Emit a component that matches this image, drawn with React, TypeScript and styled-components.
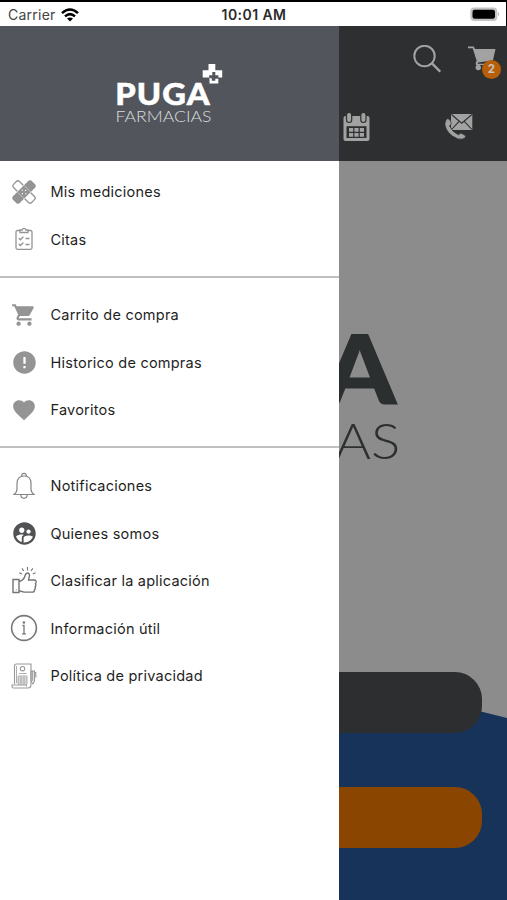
import React from "react";
import styled, { createGlobalStyle } from "styled-components";
import { MdShoppingCart, MdError, MdFavorite, MdSupervisedUserCircle } from "react-icons/md";

const GlobalStyle = createGlobalStyle`
  * { box-sizing: border-box; }
  body { margin: 0; background: #fff; font-family: Inter, "Liberation Sans", sans-serif; }
`;

const Screen = styled.div`
  width: 507px;
  height: 900px;
  display: flex;
  flex-direction: column;
  overflow: hidden;
`;

const StatusBar = styled.header`
  height: 25.5px;
  flex: none;
  border-top: 2px solid #000;
  border-right: 1px solid #000;
  display: grid;
  grid-template-columns: 1fr auto 1fr;
  align-items: center;
  padding: 2px 6px 0 8px;
  color: #2b2b2b;
  font-size: 14px;
`;

const Carrier = styled.span`
  display: flex;
  align-items: center;
  gap: 5px;
  letter-spacing: 0.25px;
  color: #444;
`;

const Clock = styled.span`
  font-weight: 600;
  font-size: 14px;
  letter-spacing: 0.42px;
`;

const BatterySlot = styled.span`
  display: flex;
  justify-content: flex-end;
`;

const Body = styled.div`
  flex: 1;
  min-height: 0;
  display: grid;
  grid-template-columns: 339px 168px;
`;

const Drawer = styled.nav`
  background: #fff;
  display: flex;
  flex-direction: column;
`;

const DrawerHeader = styled.div`
  height: 135px;
  flex: none;
  background: #52565c;
  display: flex;
  justify-content: center;
  padding-top: 36.5px;
`;

const MenuGroup = styled.ul`
  list-style: none;
  margin: 0;
  padding: 7.3px 0 12.8px;
  border-bottom: 2px solid #c0c0c0;
  & + & {
    padding-top: 13.5px;
  }
  &:last-child {
    border-bottom: 0;
  }
`;

const MenuItem = styled.li`
  height: 47.5px;
  display: flex;
  align-items: center;
  gap: 10.5px;
  padding-left: 8px;
`;

const IconSlot = styled.span<{ $tone?: string }>`
  width: 32px;
  height: 32px;
  flex: none;
  display: flex;
  align-items: center;
  justify-content: center;
  color: ${(p) => p.$tone ?? "#949494"};
`;

const Label = styled.span`
  font-size: 14.5px;
  letter-spacing: 0.23px;
  color: #1f1f1f;
  white-space: nowrap;
`;

const Backdrop = styled.main`
  background: #8c8c8c;
  display: flex;
  flex-direction: column;
  overflow: hidden;
`;

const TopBar = styled.div`
  height: 135px;
  flex: none;
  background: #2d2f30;
  color: #a2a2a2;
  display: grid;
  grid-template-rows: 67px 67px;
`;

const IconRow = styled.div<{ $end?: boolean }>`
  display: flex;
  align-items: center;
  justify-content: ${(p) => (p.$end ? "flex-end" : "flex-start")};
  gap: ${(p) => (p.$end ? 27 : 74)}px;
  padding: ${(p) => (p.$end ? "0 11px 0 0" : "1px 0 0 4px")};
`;

const CartButton = styled.span`
  position: relative;
  display: flex;
`;

const Badge = styled.span`
  position: absolute;
  left: 13.5px;
  top: 13.5px;
  width: 19.5px;
  height: 19.5px;
  border-radius: 50%;
  background: #b75e08;
  color: #c9c1b8;
  font-size: 11.5px;
  font-weight: 700;
  display: flex;
  align-items: center;
  justify-content: center;
`;

const Hero = styled.div`
  flex: 1;
  padding-top: 164px;
`;

const Actions = styled.div`
  position: relative;
  height: 228px;
  flex: none;
  display: flex;
  flex-direction: column;
  gap: 54.5px;
  &::before {
    content: "";
    position: absolute;
    inset: 0;
    background: #17335a;
    clip-path: polygon(0 4px, 100% 46px, 100% 100%, 0 100%);
  }
`;

const ActionButton = styled.div<{ $color: string }>`
  position: relative;
  width: 143px;
  height: 60.5px;
  border-radius: 0 27px 27px 0;
  background: ${(p) => p.$color};
`;

const WifiIcon = () => (
  <svg width="18" height="14" viewBox="0 0 18 14" fill="none" stroke="#000" strokeWidth="2.5">
    <path d="M1 5.2Q9-2.2 17 5.2" />
    <path d="M4 8.4Q9 3.8 14 8.4" />
    <path d="M9 13.4 6 10.6Q9 8.2 12 10.6Z" fill="#000" stroke="none" />
  </svg>
);

const BatteryIcon = () => (
  <svg width="30" height="15" viewBox="0 0 30 15">
    <rect x="0.3" y="0.5" width="27" height="13.5" rx="4" fill="#c4c4c4" />
    <rect x="2.5" y="2.7" width="22.5" height="9" rx="2.2" fill="#000" />
    <path d="M28 5q2 2.2 0 4.4z" fill="#aaa" />
  </svg>
);

const DrawerLogo = () => (
  <svg width="110" height="64" viewBox="115 62 110 64" fill="#fff">
    <text x="115.2" y="104.6" fontFamily="Lato" fontWeight="900" fontSize="30" letterSpacing="1" stroke="#fff" strokeWidth=".5" textLength="95.5" lengthAdjust="spacingAndGlyphs">PUGA</text>
    <text x="115.5" y="122.3" fontFamily="Lato" fontWeight="300" fontSize="16.2" fill="#dcdddf" textLength="96" lengthAdjust="spacingAndGlyphs">FARMACIAS</text>
    <path d="M208.5 64h6.8v6.2h6.9v7.3h-3.8v-2.2h-3.1v-3.2h-3v3.2h-3.2v2.9h2.7v2.5h3.5v-1.9h3v4.700h-8.800v-5.900h-6.800v-7.400h5.800z" />
  </svg>
);

const HeroLogo = () => (
  <svg width="168" height="140" viewBox="339 325 168 140" fill="#2c2f30" display="block">
    <text x="323.5" y="404.300" fontFamily="Lato" fontWeight="900" fontSize="95.500" stroke="#2c2f30" strokeWidth="1.200" textLength="72.500" lengthAdjust="spacingAndGlyphs">A</text>
    <text x="335.300" y="458.600" fontFamily="Lato" fontWeight="300" fontSize="48.500" textLength="65" lengthAdjust="spacingAndGlyphs">AS</text>
  </svg>
);

const SearchIcon = () => (
  <svg width="28" height="28" viewBox="0 0 28 28" fill="none" stroke="currentColor" strokeWidth="2">
    <circle cx="11.5" cy="11" r="10.2" />
    <path d="m18.7 18.2 8.5 8.5" strokeWidth="2.4" />
  </svg>
);

const HeaderCartIcon = () => (
  <svg width="28" height="26" viewBox="0 0 28 26" fill="currentColor">
    <path d="M0 .5h5.8l1.2 2.6h20.500l-2.600 11.400-14.800 2-.6 1.200h14v1.400H8.200q-1-.9-.3-2.800l.8-1.300L4.700 2.300H0z" />
    <circle cx="10.300" cy="21.500" r="2.700" />
    <circle cx="20.500" cy="21.500" r="2.700" />
  </svg>
);

const CalendarIcon = () => (
  <svg width="28" height="28" viewBox="0 0 28 28">
    <path d="M2.500 3h22q2 0 2 2v21q0 2-2 2h-22q-2 0-2-2V5q0-2 2-2z" fill="currentColor" />
    <g fill="currentColor" stroke="#2d2f30" strokeWidth="1.2">
      <rect x="3.500" y="-0.500" width="5.200" height="10" rx="2.400" />
      <rect x="17.800" y="-0.500" width="5.200" height="10" rx="2.400" />
    </g>
    <path d="M3.500 13.200h20V25h-20z" fill="#2d2f30" />
    <path d="M6 15h4.200v3.700H6zm5.400 0h4.200v3.700h-4.200zm5.400 0H21v3.700h-4.200zM6 20h4.200v3.700H6zm5.400 0h4.200v3.700h-4.200zm5.400 0H21v3.700h-4.200z" fill="currentColor" />
  </svg>
);

const ContactIcon = () => (
  <svg width="29" height="28" viewBox="0 0 29 28" fill="currentColor">
    <path d="M6 1h21.300v16H6z" />
    <path d="m6.500 1.500 10.200 8.700 10.200-8.700M6.500 16.500l7.600-8.200m12.800 8.200-7.600-8.200" fill="none" stroke="#2d2f30" strokeWidth="1.100" />
    <path d="M2.500 5.500q3 .3 4 5.300l-2 2q2.500 6 8.800 9l2.300-1.600q4.700 1 5.400 3.900-3.300 3.400-8.600 1.600Q1.500 21-.2 11.500 0 7.200 2.500 5.500z" stroke="#2d2f30" strokeWidth=".7" />
  </svg>
);

const BandageIcon = () => (
  <svg width="24" height="24" viewBox="0 0 24 24">
    <g transform="rotate(45 12 12)">
      <rect x="-0.800" y="7.800" width="25.600" height="8.400" rx="2.200" fill="#fff" stroke="currentColor" strokeWidth="1.300" />
    </g>
    <g transform="rotate(-45 12 12)">
      <rect x="-1.500" y="7" width="27" height="10" rx="2.400" fill="currentColor" stroke="#fff" strokeWidth=".6" />
      <path d="M7.300 7.300v9.400M16.700 7.300v9.400" stroke="#fff" strokeWidth=".4" />
      <path d="M11.300 9.500h1.400M9 12h1.400m4.600 0h-1.400m-2.300 2.500h1.400" stroke="#fff" strokeWidth="1" />
    </g>
  </svg>
);

const ChecklistIcon = () => (
  <svg width="18" height="24" viewBox="0 0 18 24" fill="none" stroke="currentColor" strokeWidth="1.300">
    <path d="M5 3.500H2.500Q1 3.500 1 5v15.800q0 1.500 1.500 1.500h13q1.500 0 1.500-1.500V5q0-1.500-1.500-1.500H13" />
    <path d="M5 5.500V3h2.200Q7.400 1.300 9 1.300T10.800 3H13v2.500z" />
    <path d="m3.700 11.300 1.700 1.500 3-3M10.500 11.500h4M3.700 17l1.700 1.500 3-3M10.500 17.500h4" />
  </svg>
);

const BellIcon = () => (
  <svg width="22" height="28" viewBox="0 0 22 28" fill="none" stroke="currentColor" strokeWidth="1.200">
    <path d="M8.800 4.500Q8.300 1.300 11 1.300t2.200 3.200" />
    <path d="M1 22.500q2.800-1.800 3-5.500v-6Q4.400 4.300 11 4t7 7v6q.2 3.700 3 5.500z" />
    <path d="M7.800 23q.2 3.300 3.200 3.300t3.200-3.300" />
  </svg>
);

const ThumbIcon = () => (
  <svg width="25" height="28" viewBox="0 0 25 28" fill="none" stroke="currentColor" strokeWidth="1.400">
    <path d="M1 12.500h6v13H1z" />
    <path d="M7 14.300q3.500-.3 5.500-4 .7-3.500 2.600-4.200 2.600-.3 2.300 2.600l-.8 4.300h5.800q2 .3 1.700 2.100 0 1.100-.7 1.600 1 1.700-.2 3 .6 1.700-.6 2.700.1 2.700-2.300 2.700H12l-5-1.300" />
    <path d="M15.500 3.500V0m3.500 4 1.800-2.600M11.800 4 10 1.400M20.800 7l2.700-1.200M7.300 5.800 10 7M4.300 22.500v.7" strokeWidth="1.100" />
  </svg>
);

const InfoIcon = () => (
  <svg width="28" height="28" viewBox="0 0 28 28" fill="none" stroke="currentColor" strokeWidth="1.600">
    <circle cx="14" cy="14" r="12.400" />
    <path d="M12.500 11.500H14v8M12 19.800h4" strokeWidth="1.300" />
    <circle cx="13.900" cy="8.500" r="1.300" fill="currentColor" stroke="none" />
  </svg>
);

const PolicyIcon = () => (
  <svg width="26" height="26" viewBox="0 0 26 26" fill="none" stroke="currentColor" strokeWidth="1.100">
    <path d="M3.500 21V3q0-2 2-2h14.500v21q0 3-3 3H2.500Q1 25 1 23.500V22h14.500v1.500" />
    <circle cx="11.500" cy="5.700" r="2.200" />
    <path d="M8 10.500h7.500M7 13h9v8H7zM7 15h9M7 17h9M7 19h9M10 13v8M13 13v8M5.500 3v17" strokeWidth=".8" />
    <path d="M20 8h3.500v10L22 21l-2-3zM21.700 8v10M23.500 9.500h1.300v5" />
  </svg>
);

type Entry = { label: string; icon: React.ReactNode; tone?: string };

const groups: Entry[][] = [
  [
    { label: "Mis mediciones", icon: <BandageIcon /> },
    { label: "Citas", icon: <ChecklistIcon /> },
  ],
  [
    { label: "Carrito de compra", icon: <MdShoppingCart size={26} /> },
    { label: "Historico de compras", icon: <MdError size={27} /> },
    { label: "Favoritos", icon: <MdFavorite size={26} /> },
  ],
  [
    { label: "Notificaciones", icon: <BellIcon />, tone: "#858585" },
    { label: "Quienes somos", icon: <MdSupervisedUserCircle size={27} />, tone: "#505253" },
    { label: "Clasificar la aplicación", icon: <ThumbIcon />, tone: "#747474" },
    { label: "Información útil", icon: <InfoIcon />, tone: "#777" },
    { label: "Política de privacidad", icon: <PolicyIcon />, tone: "#999" },
  ],
];

export default function App() {
  return (
    <Screen>
      <GlobalStyle />
      <StatusBar>
        <Carrier>
          Carrier <WifiIcon />
        </Carrier>
        <Clock>10:01 AM</Clock>
        <BatterySlot>
          <BatteryIcon />
        </BatterySlot>
      </StatusBar>
      <Body>
        <Drawer>
          <DrawerHeader>
            <DrawerLogo />
          </DrawerHeader>
          {groups.map((items, i) => (
            <MenuGroup key={i}>
              {items.map((item) => (
                <MenuItem key={item.label}>
                  <IconSlot $tone={item.tone}>{item.icon}</IconSlot>
                  <Label>{item.label}</Label>
                </MenuItem>
              ))}
            </MenuGroup>
          ))}
        </Drawer>
        <Backdrop>
          <TopBar>
            <IconRow $end>
              <SearchIcon />
              <CartButton>
                <HeaderCartIcon />
                <Badge>2</Badge>
              </CartButton>
            </IconRow>
            <IconRow>
              <CalendarIcon />
              <ContactIcon />
            </IconRow>
          </TopBar>
          <Hero>
            <HeroLogo />
          </Hero>
          <Actions>
            <ActionButton $color="#2c2e30" />
            <ActionButton $color="#8a4600" />
          </Actions>
        </Backdrop>
      </Body>
    </Screen>
  );
}
